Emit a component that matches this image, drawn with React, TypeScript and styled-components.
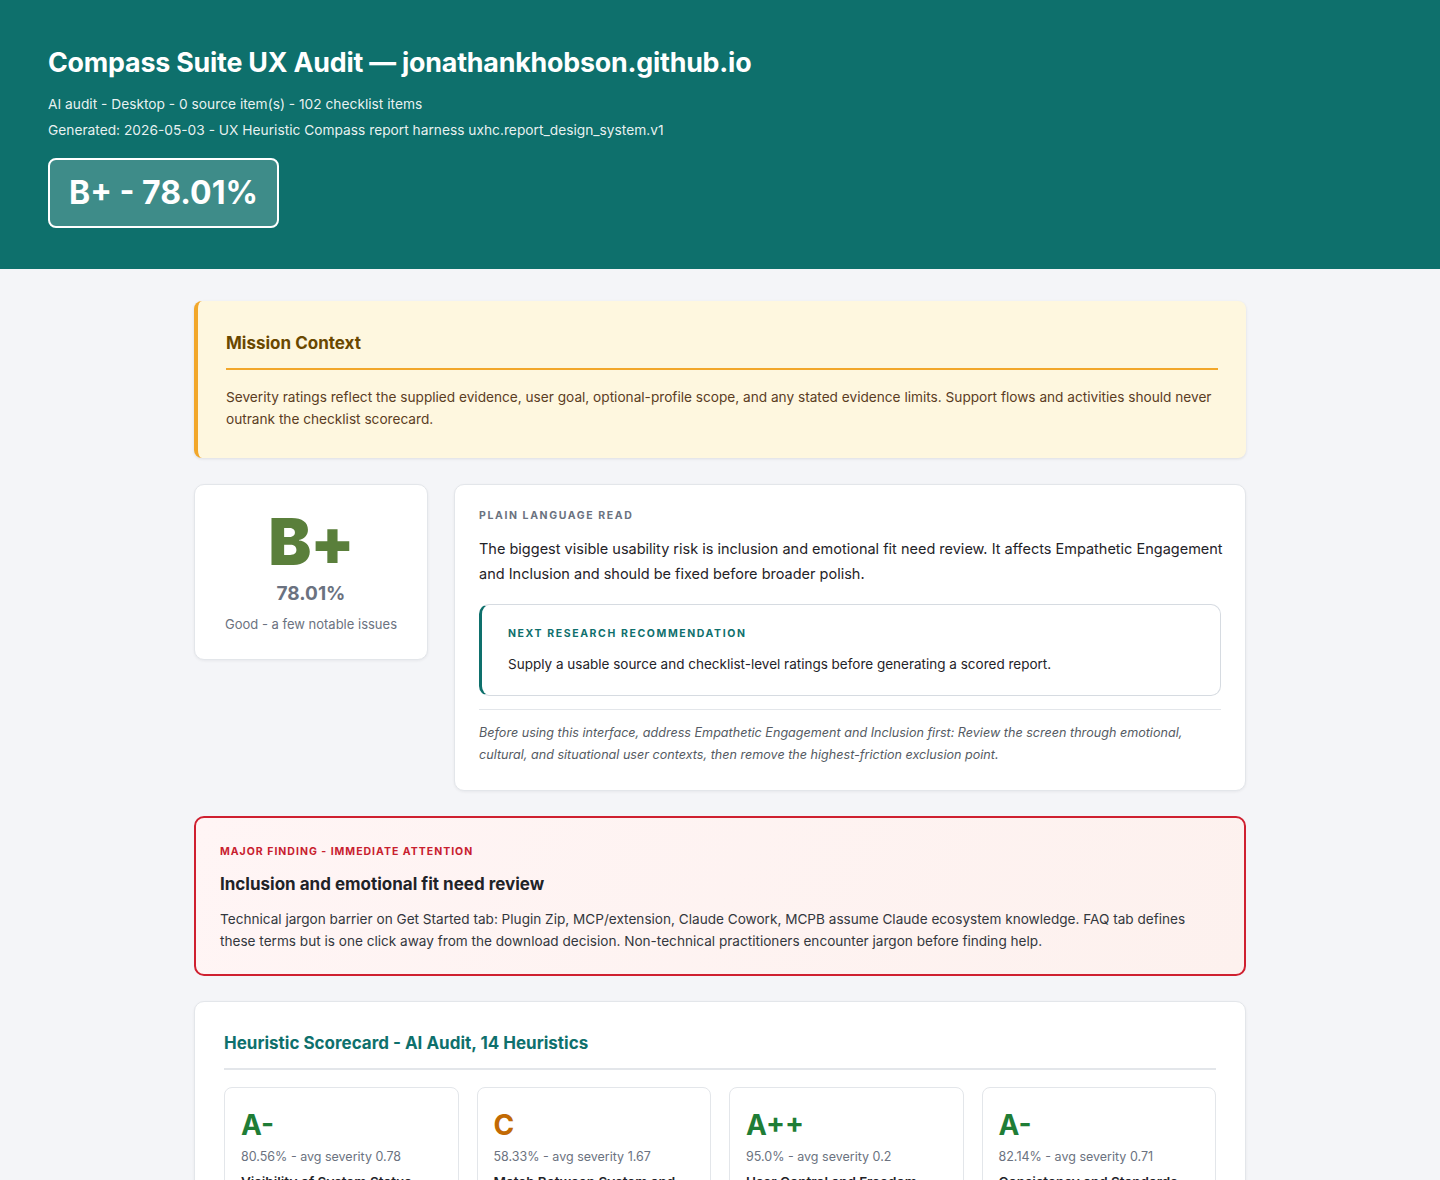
import styled, { createGlobalStyle } from "styled-components";

const GlobalStyle = createGlobalStyle`
  body {
    margin: 0;
    background: #f4f5f8;
    font-family: Inter, "Noto Sans", "Liberation Sans", sans-serif;
    color: #1f2328;
  }
  * { box-sizing: border-box; }
`;

const heuristics = [
  { grade: "A-", tone: "good", pct: "80.56%", sev: "0.78", name: "Visibility of System Status" },
  { grade: "C", tone: "warn", pct: "58.33%", sev: "1.67", name: "Match Between System and the Real World" },
  { grade: "A++", tone: "good", pct: "95.0%", sev: "0.2", name: "User Control and Freedom" },
  { grade: "A-", tone: "good", pct: "82.14%", sev: "0.71", name: "Consistency and Standards" },
];

const App = () => {
  return (
    <>
      <GlobalStyle />
      <Header>
        <Title>Compass Suite UX Audit — jonathankhobson.github.io</Title>
        <Meta>AI audit - Desktop - 0 source item(s) - 102 checklist items</Meta>
        <Meta>Generated: 2026-05-03 - UX Heuristic Compass report harness uxhc.report_design_system.v1</Meta>
        <GradeBadge>B+ - 78.01%</GradeBadge>
      </Header>

      <Main>
        <MissionCard>
          <MissionTitle>Mission Context</MissionTitle>
          <MissionText>
            Severity ratings reflect the supplied evidence, user goal, optional-profile scope, and any stated
            evidence limits. Support flows and activities should never outrank the checklist scorecard.
          </MissionText>
        </MissionCard>

        <SummaryRow>
          <ScoreCard>
            <BigGrade>B+</BigGrade>
            <BigPct>78.01%</BigPct>
            <ScoreNote>Good - a few notable issues</ScoreNote>
          </ScoreCard>

          <ReadCard>
            <Eyebrow>Plain Language Read</Eyebrow>
            <ReadText>
              The biggest visible usability risk is inclusion and emotional fit need review. It affects Empathetic
              Engagement and Inclusion and should be fixed before broader polish.
            </ReadText>
            <RecBox>
              <Eyebrow $color="#0f706d">Next Research Recommendation</Eyebrow>
              <RecText>Supply a usable source and checklist-level ratings before generating a scored report.</RecText>
            </RecBox>
            <Divider />
            <Advice>
              Before using this interface, address Empathetic Engagement and Inclusion first: Review the screen
              through emotional, cultural, and situational user contexts, then remove the highest-friction exclusion
              point.
            </Advice>
          </ReadCard>
        </SummaryRow>

        <FindingCard>
          <Eyebrow $color="#c8202e" $spacing="1px">Major Finding - Immediate Attention</Eyebrow>
          <FindingTitle>Inclusion and emotional fit need review</FindingTitle>
          <FindingText>
            Technical jargon barrier on Get Started tab: Plugin Zip, MCP/extension, Claude Cowork, MCPB assume Claude
            ecosystem knowledge. FAQ tab defines these terms but is one click away from the download decision.
            Non-technical practitioners encounter jargon before finding help.
          </FindingText>
        </FindingCard>

        <ScorecardPanel>
          <PanelTitle>Heuristic Scorecard - AI Audit, 14 Heuristics</PanelTitle>
          <HeuristicGrid>
            {heuristics.map((h) => (
              <HeuristicCard key={h.name}>
                <HeuristicGrade $tone={h.tone}>{h.grade}</HeuristicGrade>
                <HeuristicStats>
                  {h.pct} - avg severity {h.sev}
                </HeuristicStats>
                <HeuristicName>{h.name}</HeuristicName>
              </HeuristicCard>
            ))}
          </HeuristicGrid>
        </ScorecardPanel>
      </Main>
    </>
  );
};

export default App;

const Header = styled.header`
  background: #0e706c;
  color: #ffffff;
  padding: 44px 48px 41px;
`;

const Title = styled.h1`
  margin: 0 0 11px;
  font-size: 26.8px;
  line-height: 36px;
  font-weight: 700;
  letter-spacing: -0.2px;
`;

const Meta = styled.p`
  margin: 0;
  font-size: 13.75px;
  line-height: 26px;
  color: rgba(255, 255, 255, 0.92);
`;

const GradeBadge = styled.div`
  display: inline-block;
  margin-top: 15px;
  padding: 14px 19px;
  border: 2px solid #ffffff;
  border-radius: 8px;
  background: rgba(255, 255, 255, 0.2);
  font-size: 32px;
  line-height: 38px;
  font-weight: 700;
`;

const Main = styled.main`
  max-width: 1100px;
  margin: 0 auto;
  padding: 32px 24px;
  display: flex;
  flex-direction: column;
  gap: 25px;
`;

const Card = styled.section`
  background: #ffffff;
  border: 1px solid #e3e6ea;
  border-radius: 10px;
  box-shadow: 0 1px 3px rgba(16, 24, 40, 0.06);
  padding: 23px 24px 24px;
`;

const MissionCard = styled.section`
  background: #fef7df;
  border-left: 4px solid #f2a72a;
  border-radius: 8px;
  box-shadow: 0 1px 3px rgba(16, 24, 40, 0.1);
  padding: 30px 28px 28px;
  margin-bottom: 1px;
`;

const MissionTitle = styled.h2`
  margin: 0;
  padding-bottom: 13px;
  border-bottom: 2px solid #f2a72a;
  font-size: 17px;
  line-height: 24px;
  font-weight: 700;
  color: #6a4800;
`;

const MissionText = styled.p`
  margin: 16px 0 0;
  font-size: 13.65px;
  line-height: 22px;
  color: #5b3d1f;
`;

const SummaryRow = styled.div`
  display: grid;
  grid-template-columns: 234px 1fr;
  gap: 26px;
  align-items: start;
`;

const ScoreCard = styled(Card)`
  text-align: center;
  padding: 24px 16px 26px;
`;

const ReadCard = styled(Card)`
  padding-right: 22px;
`;

const BigGrade = styled.div`
  font-size: 64px;
  line-height: 66px;
  font-weight: 900;
  color: #5a7f3b;
  letter-spacing: -1px;
`;

const BigPct = styled.div`
  margin-top: 6px;
  font-size: 19px;
  line-height: 26px;
  font-weight: 700;
  color: #6b7280;
`;

const ScoreNote = styled.div`
  margin-top: 8px;
  font-size: 13px;
  line-height: 18px;
  color: #6b7280;
`;

const Eyebrow = styled.div<{ $color?: string; $spacing?: string }>`
  font-size: 10.5px;
  line-height: 16px;
  font-weight: 700;
  text-transform: uppercase;
  letter-spacing: ${({ $spacing }) => $spacing || "1.6px"};
  color: ${({ $color }) => $color || "#6b7280"};
`;

const ReadText = styled.p`
  margin: 12px 0 18px;
  font-size: 14.5px;
  line-height: 25px;
  color: #1f2328;
`;

const RecBox = styled.div`
  border: 1px solid #d6dbe1;
  border-left: 3px solid #0e706c;
  border-radius: 10px;
  padding: 21px 26px 21px;
  margin-right: 2px;
`;

const RecText = styled.p`
  margin: 12px 0 0;
  font-size: 13.5px;
  line-height: 20px;
  color: #1f2328;
`;

const Divider = styled.hr`
  border: none;
  border-top: 1px solid #e3e6ea;
  margin: 13px 2px 12px 0;
`;

const Advice = styled.p`
  margin: 0;
  font-size: 12.6px;
  line-height: 22px;
  font-style: italic;
  color: #555b63;
`;

const FindingCard = styled.section`
  background: linear-gradient(120deg, #fff5f5 0%, #fdf1ee 100%);
  border: 2px solid #cf2030;
  border-radius: 10px;
  padding: 26px 32px 22px 24px;
`;

const FindingTitle = styled.h3`
  margin: 12px 0 12px;
  font-size: 17px;
  line-height: 24px;
  font-weight: 700;
  color: #1f2328;
`;

const FindingText = styled.p`
  margin: 0;
  font-size: 13.6px;
  line-height: 22px;
  color: #33373d;
`;

const ScorecardPanel = styled(Card)`
  padding: 29px 29px 24px;
`;

const PanelTitle = styled.h2`
  margin: 0;
  padding-bottom: 13px;
  border-bottom: 2px solid #e3e6ea;
  font-size: 17px;
  line-height: 24px;
  font-weight: 700;
  color: #0e706c;
`;

const HeuristicGrid = styled.div`
  margin-top: 17px;
  display: grid;
  grid-template-columns: repeat(4, 1fr);
  gap: 18px;
`;

const HeuristicCard = styled.div`
  border: 1px solid #e3e6ea;
  border-radius: 8px;
  padding: 20px 16px 16px;
`;

const HeuristicGrade = styled.div<{ $tone: string }>`
  font-size: 28px;
  line-height: 34px;
  font-weight: 700;
  color: ${({ $tone }) => ($tone === "warn" ? "#c26a04" : "#1f7d36")};
`;

const HeuristicStats = styled.div`
  margin-top: 6px;
  font-size: 12.5px;
  line-height: 18px;
  color: #6b7280;
`;

const HeuristicName = styled.div`
  margin-top: 6px;
  font-size: 13.5px;
  line-height: 20px;
  font-weight: 600;
  color: #1f2328;
`;
